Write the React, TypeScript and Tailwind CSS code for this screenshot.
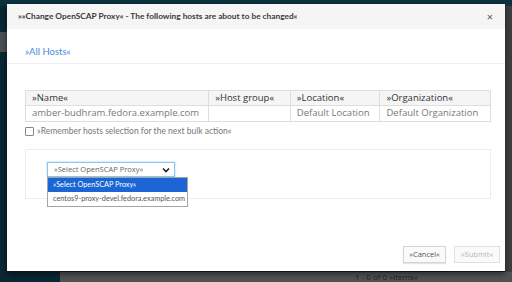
import React from "react";

const cols = [
    {label: "»Name«", value: "amber-budhram.fedora.example.com", w: "w-[183px]"},
    {label: "»Host group«", value: "", w: "w-[82px]"},
    {label: "»Location«", value: "Default Location", w: "w-[90px]"},
    {label: "»Organization«", value: "Default Organization", w: "w-[111px]"},
];

function ChevronDown() {
    return (
        <svg width="8" height="6" viewBox="0 0 8 6" className="text-[#222]">
            <path d="M1 1.5 L4 4.5 L7 1.5" fill="none" stroke="currentColor" strokeWidth="1.6"/>
        </svg>
    );
}

export default function App() {
    return (
        <div className="relative w-[512px] h-[282px] overflow-hidden bg-[#47494b] font-['Open_Sans',sans-serif]">
            {/* dimmed page behind the modal */}
            <div className="flex h-full">
                <div className="w-[60px] h-full bg-[#0a2733] flex flex-col">
                    <div className="h-[6px] bg-[#0d3240]"/>
                    <div className="mt-[26px] h-[20px] w-[7px] bg-[#4a4f52]"/>
                </div>
                <div className="flex-1 flex flex-col">
                    <div className="h-[6px] bg-[#0d3240]"/>
                    <div className="flex-1 bg-[#3c3e40]"/>
                    <div className="h-[10px] bg-[#505254] flex items-center pl-[295px] text-[8px] text-[#222]">
                        1 - 0 of 0 »items«
                    </div>
                </div>
            </div>

            {/* modal */}
            <div
                className="absolute left-[7px] top-[4px] w-[498px] h-[268px] bg-white flex flex-col border-b border-[#111] shadow-[0_2px_6px_rgba(0,0,0,0.5)]">
                <div className="h-[25px] bg-[#f5f5f5] flex items-center justify-between pl-[11px] pr-[12px]">
                    <span className="font-['Lato',sans-serif] text-[8.3px] font-bold text-[#3a3a3a]">
                        »»Change OpenSCAP Proxy« - The following hosts are about to be changed«
                    </span>
                    <span className="text-[11px] text-[#555] leading-none">×</span>
                </div>

                <div className="h-[35px] border-b border-[#ededed] flex items-end pb-[4px] pl-[18px]">
                    <span className="font-['Lato',sans-serif] text-[9.5px] text-[#3f8ae2]">»All Hosts«</span>
                </div>

                <div className="pl-[18px] pt-[26px]">
                    <div className="w-[466px] border border-[#dedede] text-[9.5px]">
                        <div className="flex h-[15px] bg-[#f5f5f5] border-b border-[#dedede]">
                            {cols.map((c, i) => (
                                <div key={c.label}
                                     className={`${c.w} flex items-center pl-[6px] text-[#333] ${i > 0 ? "border-l border-[#dedede]" : ""}`}>
                                    {c.label}
                                </div>
                            ))}
                        </div>
                        <div className="flex h-[15px]">
                            {cols.map((c, i) => (
                                <div key={c.label}
                                     className={`${c.w} flex items-center pl-[6px] text-[#777] ${i > 0 ? "border-l border-[#dedede]" : ""}`}>
                                    {c.value}
                                </div>
                            ))}
                        </div>
                    </div>

                    <div className="flex items-center gap-[3px] mt-[3px] h-[12px] font-['Lato',sans-serif] text-[8.5px] text-[#777]">
                        <div className="w-[9px] h-[9px] border border-[#888] rounded-[1px] bg-white"/>
                        <span>»Remember hosts selection for the next bulk action«</span>
                    </div>

                    <div className="relative mt-[12px] w-[466px] h-[50px] border border-[#ededed] pl-[21px] pt-[12px]">
                        <div
                            className="w-[128px] h-[15px] border border-[#8fc3ec] shadow-[0_0_2px_#9fd0f5] flex items-center justify-between pl-[6px] pr-[4px] text-[7.5px] text-[#666]">
                            <span>»Select OpenSCAP Proxy«</span>
                            <ChevronDown/>
                        </div>
                        <div
                            className="absolute left-[21px] top-[27px] w-[141px] bg-white border border-[#a5a5a5] text-[7.3px] z-10 font-['Lato',sans-serif]">
                            <div className="h-[14px] bg-[#1b65d4] text-white flex items-center pl-[5px] whitespace-nowrap">
                                »Select OpenSCAP Proxy«
                            </div>
                            <div className="h-[14px] text-[#555] flex items-center pl-[5px] whitespace-nowrap">
                                centos9-proxy-devel.fedora.example.com
                            </div>
                        </div>
                    </div>
                </div>

                <div className="flex-1"/>
                <div className="flex justify-end gap-[8px] pr-[5px] pb-[8px]">
                    <button
                        className="w-[43px] h-[17px] border border-[#d4d4d4] bg-[#fafafa] shadow-[0_1px_1px_rgba(0,0,0,0.1)] text-[7.5px] text-[#555]">
                        »Cancel«
                    </button>
                    <button
                        className="w-[46px] h-[17px] border border-[#e0e0e0] bg-[#fafafa] text-[7.5px] text-[#b5b5b5]">
                        »Submit«
                    </button>
                </div>
            </div>
        </div>
    );
}
